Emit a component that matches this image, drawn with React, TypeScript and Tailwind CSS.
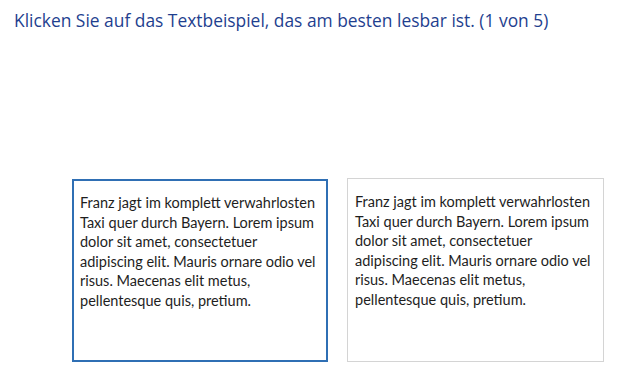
const lines = [
  "Franz jagt im komplett verwahrlosten",
  "Taxi quer durch Bayern. Lorem ipsum",
  "dolor sit amet, consectetuer",
  "adipiscing elit. Mauris ornare odio vel",
  "risus. Maecenas elit metus,",
  "pellentesque quis, pretium.",
]

function Sample() {
  return (
    <p className="text-[14.5px] leading-[19.5px] text-[#1e1e1e] font-['Lato',sans-serif] whitespace-nowrap">
      {lines.map((l) => (
        <span key={l} className="block">
          {l}
        </span>
      ))}
    </p>
  )
}

export default function App() {
  return (
    <div className="w-[640px] h-[385px] bg-white overflow-hidden">
      <h1 className="pl-[14px] pt-[8px] text-[17.4px] leading-[24px] text-[#1f3f8f] font-['Open_Sans',sans-serif]">
        Klicken Sie auf das Textbeispiel, das am besten lesbar ist. (1 von 5)
      </h1>
      <div className="flex pl-[72px] pt-[147px] gap-[19px] items-start">
        <div className="w-[256px] h-[183px] border-2 border-[#2f6fb4] pl-[6px] pt-[12px]">
          <Sample />
        </div>
        <div className="w-[257px] h-[184px] -mt-px border border-[#d4d4d4] pl-[7px] pt-[13px]">
          <Sample />
        </div>
      </div>
    </div>
  )
}
